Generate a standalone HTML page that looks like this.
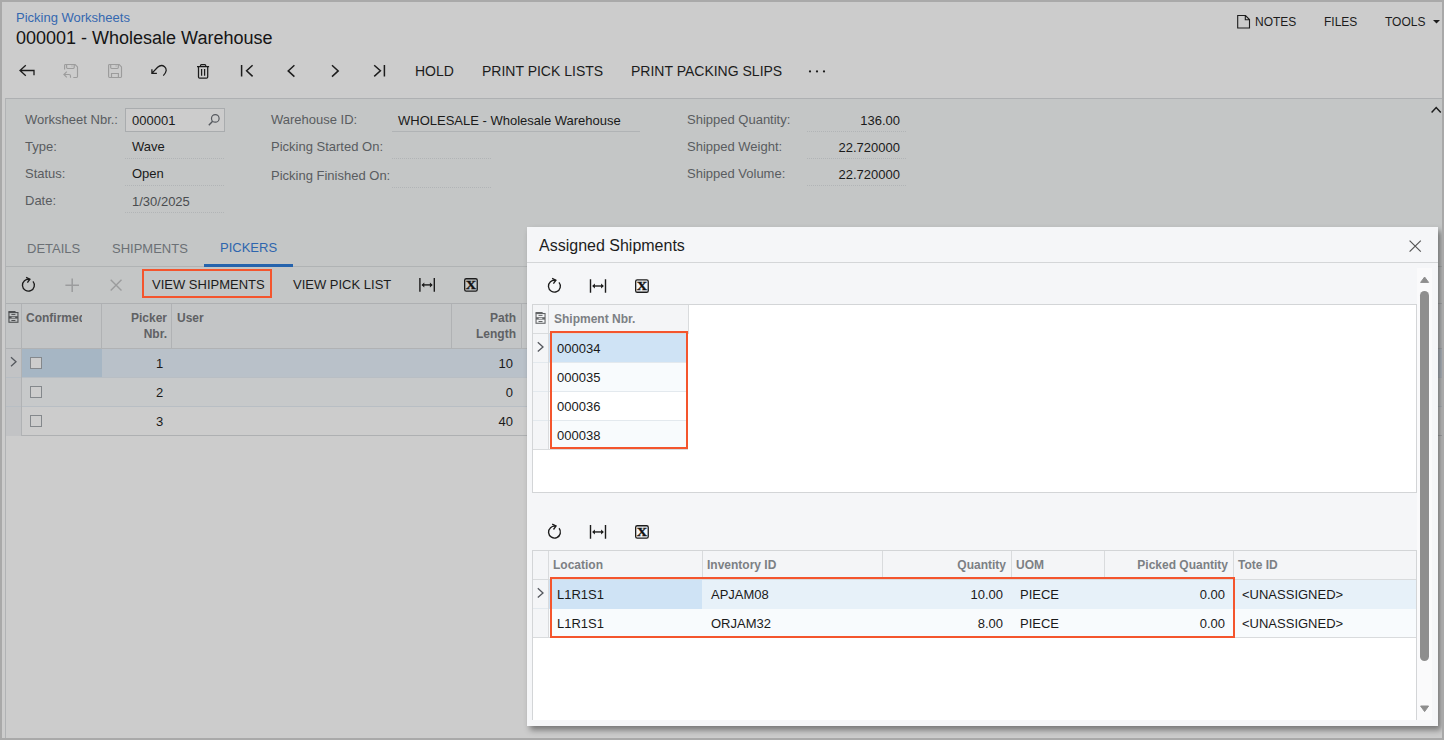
<!DOCTYPE html>
<html><head><meta charset="utf-8">
<title>Picking Worksheets</title>
<style>
*{box-sizing:border-box;margin:0;padding:0}
html,body{width:1444px;height:740px;overflow:hidden}
body{background:#cccccc;font-family:"Liberation Sans",Arial,sans-serif;color:#1a1a1a;position:relative;font-size:13px}
.abs{position:absolute}
.t{position:absolute;white-space:nowrap;line-height:1}
#frame{position:absolute;left:0;top:0;width:1444px;height:740px;border:2px solid #a9a9a9;border-right-width:2px;border-bottom-width:2px;pointer-events:none;z-index:50}
.lbl{color:#595c60}
.val{color:#1a1a1a}
.dot{position:absolute;height:0;border-bottom:1px dotted #b1b4b6}
.tb{font-size:14px;color:#1c1c1c}
.hdr{font-weight:bold;color:#7c8084;font-size:12px}
.hd2{color:#5f6164 !important}
.vl{position:absolute;width:1px;background:#b0b2b4}
.hl{position:absolute;height:1px;background:#b0b2b4}
svg{position:absolute;overflow:visible}
</style></head><body>
<div id="frame"></div>

<!-- title area -->
<div class="t" style="left:16px;top:11px;font-size:13px;color:#3568b0">Picking Worksheets</div>
<div class="t" style="left:16px;top:29px;font-size:18px;color:#151515">000001 - Wholesale Warehouse</div>

<div class="t" style="left:1255px;top:16px;font-size:12px;color:#1c1c1c">NOTES</div>
<div class="t" style="left:1324px;top:16px;font-size:12px;color:#1c1c1c">FILES</div>
<div class="t" style="left:1385px;top:16px;font-size:12px;color:#1c1c1c">TOOLS</div>

<!-- main toolbar text -->
<div class="t tb" style="left:415px;top:64px">HOLD</div>
<div class="t tb" style="left:482px;top:64px">PRINT PICK LISTS</div>
<div class="t tb" style="left:631px;top:64px">PRINT PACKING SLIPS</div>

<!-- form area -->
<div class="abs" id="form" style="left:5px;top:98px;width:1437px;height:640px;background:linear-gradient(#c4c6c6,#c4c6c6) no-repeat 0 0/100% 205px #cccccc;border-top:1px solid #aeb0b2;border-left:1px solid #b1b3b5"></div>

<div class="t lbl" style="left:25px;top:113px">Worksheet Nbr.:</div>
<div class="t lbl" style="left:25px;top:140px">Type:</div>
<div class="t lbl" style="left:25px;top:167px">Status:</div>
<div class="t lbl" style="left:25px;top:194px">Date:</div>
<div class="abs" style="left:125px;top:108px;width:100px;height:24px;border:1px solid #a9acae;background:#cccccc"></div>
<div class="t val" style="left:132px;top:114px">000001</div>
<div class="t val" style="left:132px;top:140px">Wave</div>
<div class="t val" style="left:132px;top:167px">Open</div>
<div class="t val" style="left:132px;top:195px;color:#4a4c4f">1/30/2025</div>
<div class="dot" style="left:125px;top:158px;width:99px"></div>
<div class="dot" style="left:125px;top:185px;width:99px"></div>
<div class="dot" style="left:125px;top:212px;width:99px"></div>

<div class="t lbl" style="left:271px;top:113px">Warehouse ID:</div>
<div class="t lbl" style="left:271px;top:140px">Picking Started On:</div>
<div class="t lbl" style="left:271px;top:169px">Picking Finished On:</div>
<div class="t val" style="left:398px;top:114px">WHOLESALE - Wholesale Warehouse</div>
<div class="hl" style="left:392px;top:131px;width:248px;background:#b0b3b5"></div>
<div class="dot" style="left:392px;top:158px;width:99px"></div>
<div class="dot" style="left:392px;top:187px;width:99px"></div>

<div class="t lbl" style="left:687px;top:113px">Shipped Quantity:</div>
<div class="t lbl" style="left:687px;top:140px">Shipped Weight:</div>
<div class="t lbl" style="left:687px;top:167px">Shipped Volume:</div>
<div class="t val" style="right:544px;top:114px">136.00</div>
<div class="t val" style="right:544px;top:141px">22.720000</div>
<div class="t val" style="right:544px;top:168px">22.720000</div>
<div class="dot" style="left:807px;top:131px;width:99px"></div>
<div class="dot" style="left:807px;top:158px;width:99px"></div>
<div class="dot" style="left:807px;top:185px;width:99px"></div>

<!-- tabs -->
<div class="t" style="left:27px;top:242px;font-size:13px;color:#6b7075">DETAILS</div>
<div class="t" style="left:112px;top:242px;font-size:13px;color:#6b7075">SHIPMENTS</div>
<div class="t" style="left:220px;top:241px;font-size:13px;color:#2e65ae">PICKERS</div>
<div class="hl" style="left:6px;top:266px;width:1436px;background:#b0b3b4"></div>
<div class="abs" style="left:204px;top:264px;width:89px;height:3px;background:#2563ad"></div>

<!-- pickers grid toolbar -->
<div class="t" style="left:152px;top:278px;font-size:13px;color:#1c1c1c">VIEW SHIPMENTS</div>
<div class="abs" style="left:142px;top:269px;width:130px;height:29px;border:2px solid #f4552d"></div>
<div class="t" style="left:293px;top:278px;font-size:13px;color:#1c1c1c">VIEW PICK LIST</div>

<!-- pickers grid -->
<div class="abs" style="left:6px;top:303px;width:1436px;height:133px;background:#cccccc;border-top:1px solid #aeb0b2;border-bottom:1px solid #aeb0b2"></div>
<div class="abs" style="left:6px;top:304px;width:1436px;height:44px;background:#c3c5c6"></div>
<div class="abs" style="left:6px;top:349px;width:15px;height:87px;background:#c2c3c5"></div>
<div class="abs" style="left:22px;top:378px;width:1420px;height:28px;background:#c7c9ca"></div>
<div class="abs" style="left:22px;top:349px;width:1420px;height:28px;background:#b9c1c9"></div>
<div class="abs" style="left:22px;top:349px;width:80px;height:28px;background:#a6b6c4"></div>
<div class="hl" style="left:6px;top:348px;width:1436px"></div>
<div class="hl" style="left:6px;top:377px;width:1436px;background:#b8bec4"></div>
<div class="hl" style="left:6px;top:406px;width:1436px;background:#b8bec4"></div>
<div class="vl" style="left:21px;top:304px;height:132px"></div>
<div class="vl" style="left:101px;top:304px;height:44px"></div>
<div class="vl" style="left:171px;top:304px;height:44px"></div>
<div class="vl" style="left:451px;top:304px;height:44px"></div>
<div class="vl" style="left:521px;top:304px;height:44px"></div>
<div class="t hdr hd2" style="left:26px;top:312px;width:56px;overflow:hidden">Confirmed</div>
<div class="t hdr hd2" style="right:1277px;top:312px">Picker</div>
<div class="t hdr hd2" style="right:1277px;top:328px">Nbr.</div>
<div class="t hdr hd2" style="left:177px;top:312px">User</div>
<div class="t hdr hd2" style="right:928px;top:312px">Path</div>
<div class="t hdr hd2" style="right:928px;top:328px">Length</div>
<div class="t val" style="left:156px;top:357px">1</div>
<div class="t val" style="left:156px;top:386px">2</div>
<div class="t val" style="left:156px;top:415px">3</div>
<div class="t val" style="right:931px;top:357px">10</div>
<div class="t val" style="right:931px;top:386px">0</div>
<div class="t val" style="right:931px;top:415px">40</div>
<div class="abs" style="left:30px;top:357px;width:12px;height:12px;border:1px solid #84888c;background:#cdcdcd"></div>
<div class="abs" style="left:30px;top:386px;width:12px;height:12px;border:1px solid #84888c;background:#cdcdcd"></div>
<div class="abs" style="left:30px;top:415px;width:12px;height:12px;border:1px solid #84888c;background:#cdcdcd"></div>

<!-- dialog -->
<div class="abs" id="dlg" style="left:527px;top:227px;width:911px;height:499px;background:#f5f6f8;box-shadow:3px 4px 6px rgba(0,0,0,.42)"></div>
<div class="hl" style="left:527px;top:262px;width:911px;background:#d4d6d8"></div>
<div class="t" style="left:539px;top:238px;font-size:16px;color:#1d1d1d">Assigned Shipments</div>

<!-- dialog scrollbar -->
<div class="abs" style="left:1417px;top:268px;width:15px;height:452px;background:#fafafb"></div>
<div class="abs" style="left:1420px;top:291px;width:9px;height:370px;background:#8e8e8e;border-radius:5px"></div>

<!-- top grid -->
<div class="abs" style="left:532px;top:304px;width:885px;height:189px;background:#fff;border:1px solid #d3d5d7"></div>
<div class="abs" style="left:533px;top:305px;width:155px;height:29px;background:#f4f5f7"></div>
<div class="abs" style="left:533px;top:334px;width:15px;height:116px;background:#f4f5f7"></div>
<div class="abs" style="left:549px;top:334px;width:139px;height:29px;background:#cfe3f5"></div>
<div class="abs" style="left:549px;top:363px;width:139px;height:29px;background:#f8fbfd"></div>
<div class="abs" style="left:549px;top:421px;width:139px;height:29px;background:#f8fbfd"></div>
<div class="hl" style="left:533px;top:333px;width:155px;background:#d9dbdd"></div>
<div class="hl" style="left:533px;top:362px;width:155px;background:#e3e9ee"></div>
<div class="hl" style="left:533px;top:391px;width:155px;background:#e3e9ee"></div>
<div class="hl" style="left:533px;top:420px;width:155px;background:#e3e9ee"></div>
<div class="hl" style="left:533px;top:449px;width:155px;background:#d9dbdd"></div>
<div class="vl" style="left:548px;top:305px;height:145px;background:#d9dbdd"></div>
<div class="vl" style="left:688px;top:305px;height:29px;background:#d9dbdd"></div>
<div class="t hdr" style="left:554px;top:313px">Shipment Nbr.</div>
<div class="t val" style="left:557px;top:342px">000034</div>
<div class="t val" style="left:557px;top:371px">000035</div>
<div class="t val" style="left:557px;top:400px">000036</div>
<div class="t val" style="left:557px;top:429px">000038</div>
<div class="abs" style="left:550px;top:331px;width:138px;height:118px;border:2px solid #f4552d"></div>

<!-- bottom grid -->
<div class="abs" style="left:532px;top:550px;width:885px;height:170px;background:#fff;border:1px solid #d3d5d7;border-bottom:none"></div>
<div class="abs" style="left:533px;top:551px;width:883px;height:28px;background:#f4f5f7"></div>
<div class="abs" style="left:533px;top:579px;width:15px;height:59px;background:#f4f5f7"></div>
<div class="abs" style="left:549px;top:580px;width:867px;height:29px;background:#e7f1f9"></div>
<div class="abs" style="left:549px;top:580px;width:153px;height:29px;background:#cfe3f5"></div>
<div class="abs" style="left:549px;top:609px;width:867px;height:29px;background:#f8fbfd"></div>
<div class="hl" style="left:533px;top:579px;width:883px;background:#d9dbdd"></div>
<div class="hl" style="left:533px;top:608px;width:16px;background:#e3e9ee"></div>
<div class="hl" style="left:533px;top:637px;width:883px;background:#d9dbdd"></div>
<div class="vl" style="left:548px;top:551px;height:87px;background:#d9dbdd"></div>
<div class="vl" style="left:702px;top:551px;height:28px;background:#d9dbdd"></div>
<div class="vl" style="left:882px;top:551px;height:28px;background:#d9dbdd"></div>
<div class="vl" style="left:1011px;top:551px;height:28px;background:#d9dbdd"></div>
<div class="vl" style="left:1104px;top:551px;height:28px;background:#d9dbdd"></div>
<div class="vl" style="left:1233px;top:551px;height:28px;background:#d9dbdd"></div>
<div class="t hdr" style="left:553px;top:559px;">Location</div>
<div class="t hdr" style="left:707px;top:559px;">Inventory ID</div>
<div class="t hdr" style="right:438px;top:559px;">Quantity</div>
<div class="t hdr" style="left:1016px;top:559px">UOM</div>
<div class="t hdr" style="right:216px;top:559px">Picked Quantity</div>
<div class="t hdr" style="left:1238px;top:559px">Tote ID</div>
<div class="t val" style="left:557px;top:588px">L1R1S1</div>
<div class="t val" style="left:711px;top:588px">APJAM08</div>
<div class="t val" style="right:441px;top:588px">10.00</div>
<div class="t val" style="left:1020px;top:588px">PIECE</div>
<div class="t val" style="right:219px;top:588px">0.00</div>
<div class="t val" style="left:1242px;top:588px">&lt;UNASSIGNED&gt;</div>
<div class="t val" style="left:557px;top:617px">L1R1S1</div>
<div class="t val" style="left:711px;top:617px">ORJAM32</div>
<div class="t val" style="right:441px;top:617px">8.00</div>
<div class="t val" style="left:1020px;top:617px">PIECE</div>
<div class="t val" style="right:219px;top:617px">0.00</div>
<div class="t val" style="left:1242px;top:617px">&lt;UNASSIGNED&gt;</div>
<div class="abs" style="left:550px;top:577px;width:685px;height:61px;border:2px solid #f4552d"></div>

<svg id="icons" width="1444" height="740" viewBox="0 0 1444 740" style="left:0;top:0;z-index:20">
<path d="M34,75.2 V70.5 H20 M25.8,65.3 L20,70.5 L25.8,75.7" fill="none" stroke="#1c1c1c" stroke-width="1.3"/>
<path d="M64.6,69.6 V65.4 Q64.6,64.5 65.5,64.5 H75.1 L77.5,66.9 V76.6 Q77.5,77.5 76.6,77.5 H73.3 M66.6,64.5 V67.6 Q66.6,68.5 67.5,68.5 H73.3 Q74.2,68.5 74.2,67.6 V64.5 M71.5,66 H72.5" fill="none" stroke="#9c9c9c" stroke-width="1.15"/><path d="M63.9,74.5 H69 Q70.5,74.5 70.5,76 V77.7 M66.8,71.7 L63.9,74.5 L66.8,77.3" fill="none" stroke="#9c9c9c" stroke-width="1.1"/>
<path d="M109.5,64.5 H119.2 L121.5,66.9 V76.6 Q121.5,77.5 120.6,77.5 H109.5 Q108.6,77.5 108.6,76.6 V65.4 Q108.6,64.5 109.5,64.5 Z M110.7,64.5 V67.6 Q110.7,68.5 111.6,68.5 H117.4 Q118.3,68.5 118.3,67.6 V64.5 M115.6,66 H116.6 M111.5,77.5 V73.5 H118.4 V77.5" fill="none" stroke="#9c9c9c" stroke-width="1.15"/>
<path d="M151.9,69.3 V73.3 H156.9 M152.3,72.9 L157.6,67.3 C159.6,65.5 162.6,65.1 164.6,66.7 C167,68.7 166.9,72 163.3,75.6" fill="none" stroke="#1c1c1c" stroke-width="1.3"/>
<path d="M197,66.6 H209.1 M200.5,66.6 V65.4 Q200.5,64.5 201.4,64.5 H204.8 Q205.7,64.5 205.7,65.4 V66.6 M198.5,66.6 V77 Q198.5,78.2 199.7,78.2 H206.5 Q207.7,78.2 207.7,77 V66.6 M201.6,69 V75.8 M204.6,69 V75.8" fill="none" stroke="#1c1c1c" stroke-width="1.25"/>
<path d="M241.6,65 V76.6 M252.6,65.2 L246.6,70.8 L252.6,76.4" fill="none" stroke="#1c1c1c" stroke-width="1.5"/>
<path d="M294.4,65.2 L288.2,70.9 L294.4,76.6" fill="none" stroke="#1c1c1c" stroke-width="1.5"/>
<path d="M332,65.2 L338.2,70.9 L332,76.6" fill="none" stroke="#1c1c1c" stroke-width="1.5"/>
<path d="M374.2,65.2 L380.4,70.8 L374.2,76.4 M384.4,65 V76.6" fill="none" stroke="#1c1c1c" stroke-width="1.5"/>
<circle cx="810" cy="71.4" r="1.1" fill="#1c1c1c"/>
<circle cx="817" cy="71.4" r="1.1" fill="#1c1c1c"/>
<circle cx="824" cy="71.4" r="1.1" fill="#1c1c1c"/>
<path d="M1237.7,15.5 H1245.5 L1249.5,19.5 V28 H1237.7 Z M1245.3,15.7 V19.7 H1249.3" fill="none" stroke="#1c1c1c" stroke-width="1.1"/>
<path d="M1433,20 H1440 L1436.5,23.5 Z" fill="#1c1c1c"/>
<path d="M1431.6,112.4 L1436.2,107.6 L1440.8,112.4" fill="none" stroke="#1c1c1c" stroke-width="1.5"/>
<circle cx="215.3" cy="118.4" r="3.8" fill="none" stroke="#55585e" stroke-width="1.2"/><path d="M212.6,121.3 L208.8,125.2" stroke="#55585e" stroke-width="1.4"/>
<path d="M32.96,281.38 A5.95,5.95 0 1 1 29.64,279.38" fill="none" stroke="#1c1c1c" stroke-width="1.35"/><path d="M26.10,277.30 L29.90,279.20 L27.40,282.60" fill="none" stroke="#1c1c1c" stroke-width="1.35" stroke-linejoin="miter"/>
<path d="M65.4,285.2 H79 M72.2,278.4 V292" stroke="#9b9c9d" stroke-width="1.5" fill="none"/>
<path d="M110.7,279.8 L121.5,290.5 M121.5,279.8 L110.7,290.5" stroke="#9b9c9d" stroke-width="1.4" fill="none"/>
<path d="M419.9,278.1 V291.7 M434.3,278.1 V291.7" stroke="#1c1c1c" stroke-width="1.4" fill="none"/><path d="M422.5,284.9 H431.7" stroke="#1c1c1c" stroke-width="1.4" fill="none"/><path d="M421.5,284.9 L424.29999999999995,282.4 V287.4 Z M432.7,284.9 L429.90000000000003,282.4 V287.4 Z" fill="#1c1c1c"/>
<rect x="464.65" y="278.75" width="12.60" height="12.40" rx="1.6" fill="none" stroke="#1c1c1c" stroke-width="1.3"/><text transform="translate(470.95,289.05) scale(1.2,1)" text-anchor="middle" font-family="Liberation Serif,serif" font-weight="bold" font-size="12" fill="#111" stroke="#111" stroke-width="0.35">X</text>
<path d="M11,357.3 L16,361.8 L11,366.3" fill="none" stroke="#55585e" stroke-width="1.3"/>
<path d="M1409.6,240.6 L1420.8,251.6 M1420.8,240.6 L1409.6,251.6" stroke="#555" stroke-width="1.2" fill="none"/>
<path d="M558.96,282.38 A5.95,5.95 0 1 1 555.64,280.38" fill="none" stroke="#1c1c1c" stroke-width="1.35"/><path d="M552.10,278.30 L555.90,280.20 L553.40,283.60" fill="none" stroke="#1c1c1c" stroke-width="1.35" stroke-linejoin="miter"/>
<path d="M590.5,279.2 V292.8 M605.5,279.2 V292.8" stroke="#1c1c1c" stroke-width="1.4" fill="none"/><path d="M593.1,286.0 H602.9" stroke="#1c1c1c" stroke-width="1.4" fill="none"/><path d="M592.1,286.0 L594.9,283.5 V288.5 Z M603.9,286.0 L601.1,283.5 V288.5 Z" fill="#1c1c1c"/>
<rect x="635.65" y="279.85" width="12.60" height="12.40" rx="1.6" fill="none" stroke="#1c1c1c" stroke-width="1.3"/><text transform="translate(641.95,290.15) scale(1.2,1)" text-anchor="middle" font-family="Liberation Serif,serif" font-weight="bold" font-size="12" fill="#111" stroke="#111" stroke-width="0.35">X</text>
<path d="M559.06,528.28 A5.95,5.95 0 1 1 555.74,526.28" fill="none" stroke="#1c1c1c" stroke-width="1.35"/><path d="M552.20,524.20 L556.00,526.10 L553.50,529.50" fill="none" stroke="#1c1c1c" stroke-width="1.35" stroke-linejoin="miter"/>
<path d="M590.5,525.1 V538.8 M605.5,525.1 V538.8" stroke="#1c1c1c" stroke-width="1.4" fill="none"/><path d="M593.1,531.95 H602.9" stroke="#1c1c1c" stroke-width="1.4" fill="none"/><path d="M592.1,531.95 L594.9,529.45 V534.45 Z M603.9,531.95 L601.1,529.45 V534.45 Z" fill="#1c1c1c"/>
<rect x="635.65" y="525.75" width="12.60" height="12.40" rx="1.6" fill="none" stroke="#1c1c1c" stroke-width="1.3"/><text transform="translate(641.95,536.05) scale(1.2,1)" text-anchor="middle" font-family="Liberation Serif,serif" font-weight="bold" font-size="12" fill="#111" stroke="#111" stroke-width="0.35">X</text>
<path d="M537.8,342.2 L543,346.9 L537.8,351.6" fill="none" stroke="#55585e" stroke-width="1.3"/>
<path d="M537.8,588.2 L543,592.9 L537.8,597.6" fill="none" stroke="#55585e" stroke-width="1.3"/>
<path d="M1420.6,282.4 H1428.6 L1424.6,277 Z" fill="#8e8e8e" stroke="#8e8e8e" stroke-width="1" stroke-linejoin="round"/>
<path d="M1420.6,706 H1428.6 L1424.6,711.6 Z" fill="#8e8e8e" stroke="#8e8e8e" stroke-width="1" stroke-linejoin="round"/>
<g><path d="M8.4,311 H15.0 L16.6,312.6 H8.4 Z" fill="#4e5052"/><rect x="8.950000000000001" y="312.55" width="9" height="9.7" fill="none" stroke="#4e5052" stroke-width="1.1"/><rect x="8.9" y="316.2" width="9" height="2.4" fill="#4e5052"/><path d="M11.600000000000001,317.4 H15.2" stroke="#c2c3c5" stroke-width="0.9"/><path d="M11.4,314.4 H15.4 M11.4,320.5 H15.4" stroke="#4e5052" stroke-width="1"/></g>
<g><path d="M535.5,312 H542.1 L543.7,313.6 H535.5 Z" fill="#636567"/><rect x="536.05" y="313.55" width="9" height="9.7" fill="none" stroke="#636567" stroke-width="1.1"/><rect x="536.0" y="317.2" width="9" height="2.4" fill="#636567"/><path d="M538.7,318.4 H542.3" stroke="#f3f4f6" stroke-width="0.9"/><path d="M538.5,315.4 H542.5 M538.5,321.5 H542.5" stroke="#636567" stroke-width="1"/></g>
</svg>
</body></html>
